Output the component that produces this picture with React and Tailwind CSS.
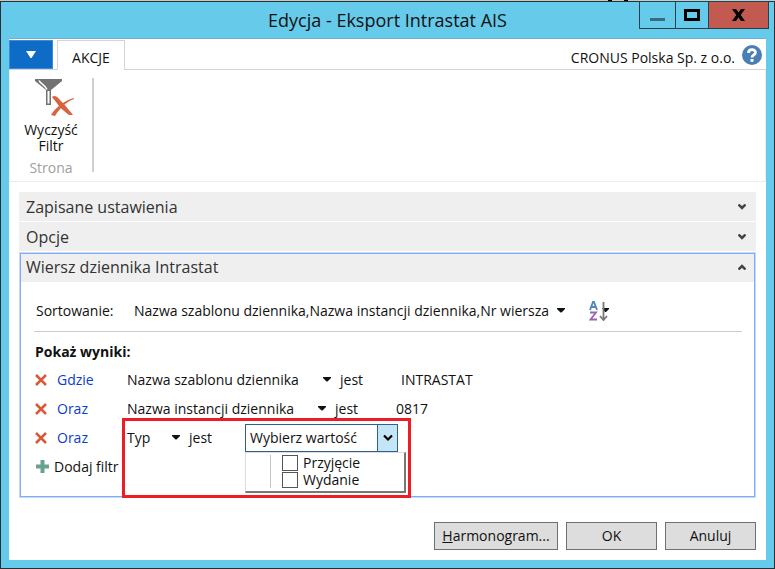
import React from "react";

function Caret({ className = "" }) {
  return (
    <svg className={`shrink-0 ${className}`} width="8" height="5" viewBox="0 0 8 5" aria-hidden="true">
      <path d="M0 0h8v1L4.5 4.5h-1L0 1z" fill="currentColor" />
    </svg>
  );
}

function Chevron({ up }) {
  return (
    <svg width="8" height="6" viewBox="0 0 8 6" aria-hidden="true" className={up ? "rotate-180" : ""}>
      <path d="M0.500 0.500L4 4l3.500-3.500" fill="none" stroke="#444" strokeWidth="2.500" />
    </svg>
  );
}

function FilterClearIcon() {
  return (
    <svg width="40" height="40" viewBox="0 0 40 40" aria-hidden="true">
      <path d="M1 1h27v2l-11 9v15h-5V12L1 3z" fill="#727272" />
      <path d="M5 2.500c1 3 6 4 8 9" fill="none" stroke="#fff" strokeWidth="1.500" />
      <path d="M13.500 13h2v12.500h-2z" fill="#fff" />
      <path d="M18 19c2-2 5-1 8 3 5 5 9 10 13 15h-4c-5-4-10-8-13-13-1-2-3-3-4-5z" fill="#d9623f" />
      <path d="M40 20c-9 2-18 9-23 17l4 1c5-8 11-14 19-17z" fill="#d9623f" />
    </svg>
  );
}

function Section({ title, open, children }) {
  return (
    <section className={open ? "border border-[#7eacf7] outline outline-[#c6daf9]" : "-mx-px"}>
      <button
        type="button"
        aria-expanded={!!open}
        className={`flex w-full items-center justify-between bg-[#efefef] text-left text-base leading-none text-[#333] ${open ? "h-7 pb-0.5 pl-[5px] pr-2" : "h-[29px] pl-[7px] pr-2.5"}`}
      >
        {title}
        <Chevron up={open} />
      </button>
      {children}
    </section>
  );
}

function FilterRow({ link, field, fieldWidth, children }) {
  return (
    <div className="relative flex h-[29px] items-center">
      <button type="button" aria-label="Usuń filtr" className="flex w-[22px] shrink-0">
        <svg width="12" height="12" viewBox="0 0 12 12" aria-hidden="true">
          <path d="M1 1l10 10M11 1L1 11" stroke="#d65a37" strokeWidth="2.500" />
        </svg>
      </button>
      <a href="#filtr" className="w-[70px] shrink-0 text-[#0a3dcf]">{link}</a>
      <button type="button" className={`flex shrink-0 items-center justify-between whitespace-nowrap ${fieldWidth}`}>
        {field}
        <Caret />
      </button>
      <span className="ml-[9px] w-14 shrink-0">jest</span>
      {children}
    </div>
  );
}

function DialogButton({ children, className }) {
  return (
    <button type="button" className={`h-7 border border-[#707070] bg-[#ddd] ${className}`}>
      {children}
    </button>
  );
}

export default function App() {
  return (
    <div className="flex min-h-screen flex-col bg-[#b9d0cf] font-['Open_Sans','Noto_Sans',sans-serif] text-sm leading-5 text-[#111]">
      <div className="flex h-px justify-end gap-3 pr-[147px]">
        <span className="w-1 bg-black" />
        <span className="w-1 bg-black" />
      </div>
      <div className="flex grow flex-col border border-[#2d2d33] bg-[#66caea]">
        <header className="relative flex h-9 items-start justify-end pr-[5px]">
          <h1 className="absolute inset-x-0 top-1.5 text-center text-lg leading-6">Edycja - Eksport Intrastat AIS</h1>
          <div className="relative -mt-px flex h-7 divide-x divide-[#26414b] border border-[#26414b]">
            <button type="button" aria-label="Minimalizuj" className="flex w-9 items-center justify-center">
              <span className="mt-2 h-[3px] w-[15px] bg-[#3a6b7c]" />
            </button>
            <button type="button" aria-label="Maksymalizuj" className="flex w-[33px] items-center justify-center">
              <span className="h-3 w-4 border-[3px] border-black" />
            </button>
            <button type="button" aria-label="Zamknij" className="flex w-[59px] items-center justify-center bg-[#c35a50]">
              <svg width="13" height="12" viewBox="0 0 13 12" aria-hidden="true">
                <path d="M0 0h4l2.500 3.500L9 0h4L8.700 6l4.300 6H9L6.500 8.500 4 12H0l4.300-6z" fill="#000" />
              </svg>
            </button>
          </div>
        </header>

        <main className="mx-2 mb-2 flex grow flex-col border-t border-[#78aec6] bg-white">
          <nav className="flex h-[31px] items-end border-b border-[#d4d4d4]">
            <button type="button" aria-label="Menu" className="flex h-[29px] w-11 items-center justify-center border border-[#3c8ad8] bg-[#0f6cc6] text-white">
              <svg width="10" height="7" viewBox="0 0 10 7" aria-hidden="true">
                <path d="M0 0h10L5.500 7h-1z" fill="#fff" />
              </svg>
            </button>
            <button type="button" className="-mb-px ml-1 h-[30px] w-[68px] border border-b-0 border-[#d4d4d4] bg-white pt-1">
              AKCJE
            </button>
            <span className="ml-auto pb-px">CRONUS Polska Sp. z o.o.</span>
            <button type="button" aria-label="Pomoc" className="mb-1 ml-[7px] mr-1">
              <svg width="20" height="20" viewBox="0 0 20 20" aria-hidden="true">
                <circle cx="10" cy="10" r="10" fill="#4a7fb5" />
                <path d="M6.500 8C6.500 3.500 13.500 3.500 13.500 7.500C13.500 9.800 10 9.800 10 12.500" fill="none" stroke="#fff" strokeWidth="2.800" />
                <path d="M8.500 14h3v2.800h-3z" fill="#fff" />
              </svg>
            </button>
          </nav>

          <div className="flex h-28 border-x border-b border-[#ececec] pt-2">
            <div className="flex w-[82px] flex-col items-center">
              <button type="button" className="flex flex-col items-center leading-4">
                <span className="ml-1.5"><FilterClearIcon /></span>
                <span className="mt-1">Wyczyść</span>
                <span>Filtr</span>
              </button>
              <span className="mt-1 text-[#a0a0a0]">Strona</span>
            </div>
            <div className="h-[94px] w-0.5 bg-[#d0d0d0]" />
          </div>

          <div className="mt-2.5 flex flex-col gap-px px-[11px]">
            <Section title="Zapisane ustawienia" />
            <Section title="Opcje" />
            <div className="h-0" />
            <Section title="Wiersz dziennika Intrastat" open>
              <div className="pb-[15px] pl-[13px] pr-3">
                <div className="flex h-[50px] items-center border-b border-[#ccc] pl-0.5 pt-2">
                  <span className="w-[98px] shrink-0">Sortowanie:</span>
                  <button type="button" className="flex items-center gap-2 whitespace-nowrap">
                    Nazwa szablonu dziennika,Nazwa instancji dziennika,Nr wiersza
                    <Caret />
                  </button>
                  <button type="button" aria-label="Kierunek sortowania" className="ml-6">
                    <svg width="20" height="20" viewBox="0 0 20 20" aria-hidden="true">
                      <path d="M1 9l3-8h1l3 8M2.500 6h4" fill="none" stroke="#4b86bd" strokeWidth="1.800" />
                      <path d="M1 11.500h6L1.500 18.500H8" fill="none" stroke="#9a62b5" strokeWidth="1.800" />
                      <path d="M13 7h7v1l-3 3h-1z" fill="#111" />
                      <path d="M14.500 1v17M11 15l3.500 4 3.500-4" fill="none" stroke="#777" strokeWidth="1.800" />
                    </svg>
                  </button>
                </div>
                <h2 className="pl-px pt-2.5 font-bold leading-5">Pokaż wyniki:</h2>
                <div className="pl-px pt-[3px]">
                  <FilterRow link="Gdzie" field="Nazwa szablonu dziennika" fieldWidth="w-[204px]">
                    <span className="ml-[5px]">INTRASTAT</span>
                  </FilterRow>
                  <FilterRow link="Oraz" field="Nazwa instancji dziennika" fieldWidth="w-[199px]">
                    <span className="ml-[5px]">0817</span>
                  </FilterRow>
                  <FilterRow link="Oraz" field="Typ" fieldWidth="w-[53px]">
                    <div className="relative">
                      <select aria-label="Wartość" className="block h-7 w-[153px] appearance-none border border-[#2f618e] bg-white pl-1">
                        <option>Wybierz wartość</option>
                      </select>
                      <span className="pointer-events-none absolute inset-y-0 right-0 flex w-[21px] items-center justify-center border border-[#2f618e] bg-[#c4e5f6]">
                        <svg width="10" height="8" viewBox="0 0 10 8" aria-hidden="true">
                          <path d="M1 1.500l4 4 4-4" fill="none" stroke="#000" strokeWidth="2.200" />
                        </svg>
                      </span>
                      <div className="absolute left-0 top-full z-10 flex w-[161px] border-2 border-l border-t border-b-[#777] border-l-[#ddd] border-r-[#777] border-t-[#ddd] bg-white pb-[3px] pt-0.5">
                        <div className="w-[25px] border-r border-[#c4c4c4]" />
                        <div className="flex flex-col gap-px pl-[11px]">
                          {["Przyjęcie", "Wydanie"].map((name) => (
                            <label key={name} className="flex h-4 items-center gap-[5px] leading-4">
                              <input type="checkbox" className="size-4 appearance-none border border-[#555] bg-white" />
                              {name}
                            </label>
                          ))}
                        </div>
                      </div>
                    </div>
                    <div className="pointer-events-none absolute left-[87px] top-[-5px] z-20 h-20 w-[289px] border-[3px] border-[#ee1c24]" />
                  </FilterRow>
                  <button type="button" className="flex h-[29px] items-center gap-1">
                    <svg width="15" height="15" viewBox="0 0 15 15" aria-hidden="true">
                      <path d="M7.500 1v13M1 7.500h13" stroke="#69a38f" strokeWidth="4" />
                    </svg>
                    Dodaj filtr
                  </button>
                </div>
              </div>
            </Section>
          </div>

          <footer className="mt-auto flex justify-end gap-2 pb-2.5 pr-2.5">
            <DialogButton className="w-[124px]"><u>H</u>armonogram...</DialogButton>
            <DialogButton className="w-[91px]">OK</DialogButton>
            <DialogButton className="w-[91px]">Anuluj</DialogButton>
          </footer>
        </main>
      </div>
    </div>
  );
}
